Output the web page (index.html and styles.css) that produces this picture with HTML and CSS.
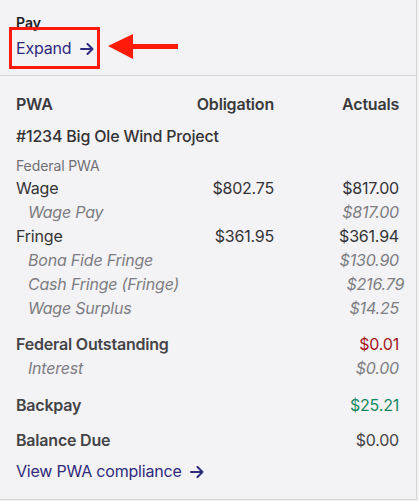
FILE: index.html
```html
<!DOCTYPE html>
<html lang="en">
<head>
    <meta charset="UTF-8">
    <meta name="viewport" content="width=device-width, initial-scale=1.0">
    <title>Pay - PWA</title>
    <link rel="stylesheet" href="styles.css">
</head>
<body>
    <div class="panel">
        <div class="pay-header">
            <div class="pay-title">Pay</div>
            <div class="expand-row">
                <div class="callout">
                    <a href="#" class="link">Expand
                        <svg class="arrow" width="14" height="12" viewBox="0 0 14 12"><path d="M1 6h11.5M7.5 1l5 5-5 5" fill="none" stroke="currentColor" stroke-width="2" stroke-linecap="round" stroke-linejoin="round"/></svg>
                    </a>
                </div>
                <svg class="pointer" width="72" height="26" viewBox="0 0 72 26">
                    <polygon points="0,12 25,0 25,10 70,10 70,15 25,15 25,25" fill="#ff1a0a"/>
                </svg>
            </div>
        </div>

        <div class="pwa-table">
            <div class="row head">
                <span>PWA</span>
                <span class="num">Obligation</span>
                <span class="num">Actuals</span>
            </div>
            <div class="project">#1234 Big Ole Wind Project</div>
            <div class="section-label">Federal PWA</div>

            <div class="row">
                <span>Wage</span>
                <span class="num">$802.75</span>
                <span class="num">$817.00</span>
            </div>
            <div class="row sub">
                <span>Wage Pay</span>
                <span class="num"></span>
                <span class="num">$817.00</span>
            </div>
            <div class="row">
                <span>Fringe</span>
                <span class="num">$361.95</span>
                <span class="num">$361.94</span>
            </div>
            <div class="row sub">
                <span>Bona Fide Fringe</span>
                <span class="num"></span>
                <span class="num">$130.90</span>
            </div>
            <div class="row sub">
                <span>Cash Fringe (Fringe)</span>
                <span class="num"></span>
                <span class="num">$216.79</span>
            </div>
            <div class="row sub">
                <span>Wage Surplus</span>
                <span class="num"></span>
                <span class="num">$14.25</span>
            </div>

            <div class="row total gap">
                <span>Federal Outstanding</span>
                <span class="num"></span>
                <span class="num due">$0.01</span>
            </div>
            <div class="row sub">
                <span>Interest</span>
                <span class="num"></span>
                <span class="num">$0.00</span>
            </div>

            <div class="row total backpay">
                <span>Backpay</span>
                <span class="num"></span>
                <span class="num paid">$25.21</span>
            </div>
            <div class="row total balance">
                <span>Balance Due</span>
                <span class="num"></span>
                <span class="num">$0.00</span>
            </div>

            <a href="#" class="link footer-link">View PWA compliance
                <svg class="arrow" width="14" height="12" viewBox="0 0 14 12"><path d="M1 6h11.5M7.5 1l5 5-5 5" fill="none" stroke="currentColor" stroke-width="2" stroke-linecap="round" stroke-linejoin="round"/></svg>
            </a>
        </div>
    </div>
</body>
</html>
```

FILE: styles.css
```css
* {
    margin: 0;
    padding: 0;
    box-sizing: border-box;
}

body {
    font-family: 'Inter', -apple-system, BlinkMacSystemFont, 'Segoe UI', Roboto, sans-serif;
    background: #f3f2f5;
    color: #333336;
    width: 419px;
    height: 501px;
    overflow: hidden;
}

.panel {
    width: 417px;
    height: 500px;
    border-right: 1px solid #d6d5d9;
    border-bottom: 1px solid #d6d5d9;
}

.pay-header {
    padding: 15px 0 0 0;
    border-bottom: 1px solid #d6d5d9;
    height: 76px;
}

.pay-title {
    font-size: 14px;
    font-weight: 600;
    color: #1c1c1e;
    line-height: 16px;
    padding-left: 16px;
}

.expand-row {
    display: flex;
    align-items: center;
    gap: 8px;
    margin-top: -4px;
    padding-left: 9px;
}

.callout {
    border: 3px solid #ff1a0a;
    width: 91px;
    height: 42px;
    display: flex;
    align-items: center;
    padding-left: 4px;
}

.pointer {
    display: block;
    margin-top: -2px;
}

.link {
    color: #2f2a7c;
    text-decoration: none;
    font-size: 16px;
    letter-spacing: -0.2px;
    white-space: nowrap;
}

.arrow {
    margin-left: 4px;
    vertical-align: -1px;
}

.pwa-table {
    padding: 16px 17px 0 16px;
    font-size: 16px;
}

.row {
    display: grid;
    grid-template-columns: 1fr 100px 125px;
    line-height: 24px;
    height: 24px;
    letter-spacing: -0.2px;
    white-space: nowrap;
}

.num {
    text-align: right;
}

.head {
    font-weight: 600;
    color: #3a3a3d;
}

.project {
    font-weight: 500;
    line-height: 24px;
    margin-top: 8px;
    letter-spacing: -0.2px;
}

.section-label {
    font-size: 14px;
    color: #707074;
    line-height: 20px;
    margin-top: 8px;
    letter-spacing: -0.1px;
}

.sub {
    font-style: italic;
    color: #7d7d82;
}

.sub span:first-child {
    padding-left: 12px;
}

.total {
    font-weight: 600;
    color: #444447;
}

.total .num {
    font-weight: 400;
}

.gap {
    margin-top: 12px;
}

.backpay {
    margin-top: 13px;
}

.balance {
    margin-top: 11px;
}

.due {
    color: #a5151c;
}

.paid {
    color: #138a5e;
}

.footer-link {
    display: block;
    margin-top: 7px;
    line-height: 24px;
}
```
